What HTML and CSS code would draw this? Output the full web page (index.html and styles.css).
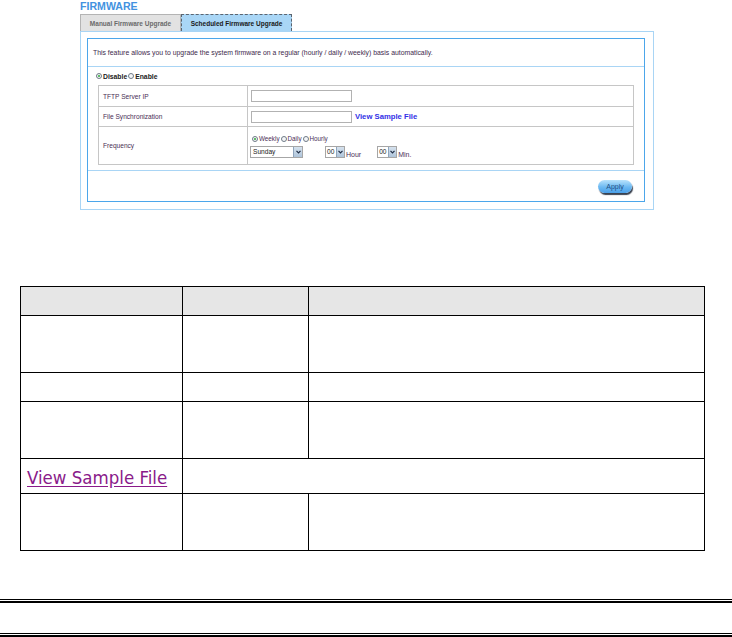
FILE: index.html
```html
<!DOCTYPE html>
<html>
<head>
<meta charset="utf-8">
<link rel="stylesheet" href="styles.css">
</head>
<body>
<div class="fw">
  <div class="fw-title">FIRMWARE</div>
  <div class="tabs">
    <div class="tab">Manual Firmware Upgrade</div>
    <div class="tab tab-active">Scheduled Firmware Upgrade</div>
  </div>
  <div class="outer">
    <div class="inner">
      <div class="desc">This feature allows you to upgrade the system firmware on a regular (hourly / daily / weekly) basis automatically.</div>
      <div class="mode">
        <span class="radio on"></span><span class="mode-txt">Disable</span>
        <span class="radio"></span><span class="mode-txt">Enable</span>
      </div>
      <table class="cfg">
        <colgroup><col class="cfg-c1"><col></colgroup>
        <tr class="cfg-r1"><td class="lbl">TFTP Server IP</td><td class="val"><span class="field"></span></td></tr>
        <tr class="cfg-r2"><td class="lbl">File Synchronization</td><td class="val"><span class="field"></span><a class="sample">View Sample File</a></td></tr>
        <tr class="cfg-r3"><td class="lbl">Frequency</td><td class="val">
          <div class="freq-opts">
            <span class="radio on"></span><span class="opt-txt">Weekly</span>
            <span class="radio"></span><span class="opt-txt">Daily</span>
            <span class="radio"></span><span class="opt-txt">Hourly</span>
          </div>
          <div class="freq-sel">
            <span class="select sel-day"><span class="sel-text">Sunday</span><span class="sel-arrow"><svg width="5" height="4" viewBox="0 0 5 4"><path d="M0.5 0.8 L2.5 2.8 L4.5 0.8" fill="none" stroke="#1e2c44" stroke-width="1.2"/></svg></span></span>
            <span class="select sel-num sel-hour"><span class="sel-text">00</span><span class="sel-arrow"><svg width="5" height="4" viewBox="0 0 5 4"><path d="M0.5 0.8 L2.5 2.8 L4.5 0.8" fill="none" stroke="#1e2c44" stroke-width="1.2"/></svg></span></span><span class="unit">Hour</span>
            <span class="select sel-num sel-min"><span class="sel-text">00</span><span class="sel-arrow"><svg width="5" height="4" viewBox="0 0 5 4"><path d="M0.5 0.8 L2.5 2.8 L4.5 0.8" fill="none" stroke="#1e2c44" stroke-width="1.2"/></svg></span></span><span class="unit">Min.</span>
          </div>
        </td></tr>
      </table>
      <div class="foot"><span class="apply">Apply</span></div>
    </div>
  </div>
</div>

<table class="doc">
  <colgroup><col class="doc-c1"><col class="doc-c2"><col class="doc-c3"></colgroup>
  <tr class="doc-head"><td></td><td></td><td></td></tr>
  <tr class="doc-tall"><td></td><td></td><td></td></tr>
  <tr class="doc-short"><td></td><td></td><td></td></tr>
  <tr class="doc-tall"><td></td><td></td><td></td></tr>
  <tr class="doc-link"><td><a class="doc-sample">View Sample File</a></td><td colspan="2"></td></tr>
  <tr class="doc-tall"><td></td><td></td><td></td></tr>
</table>

<div class="rule rule-first"></div>
<div class="rule rule-second"></div>
</body>
</html>
```

FILE: styles.css
```css
html, body {
  margin: 0;
  padding: 0;
  background: #ffffff;
}
body {
  font-family: "Liberation Sans", Arial, sans-serif;
  width: 732px;
}

/* ---------- firmware screenshot ---------- */
.fw {
  margin-left: 80px;
  width: 574px;
}
.fw-title {
  height: 14px;
  font-size: 10.6px;
  line-height: 13px;
  font-weight: bold;
  color: #4392e0;
}
.tabs {
  display: flex;
  height: 17px;
}
.tab {
  box-sizing: border-box;
  width: 101px;
  height: 17px;
  background: #e2e2e2;
  border: 1px solid #b4b4b4;
  border-bottom: none;
  color: #6a6a6a;
  font-size: 6.5px;
  font-weight: bold;
  display: flex;
  align-items: center;
  justify-content: center;
}
.tab-active {
  width: 111px;
  background: #a9d6f6;
  border: 1px dashed #5a6470;
  border-bottom: none;
  color: #1a1a1a;
}
.outer {
  border: 1px solid #a9d5f5;
  padding: 6px 8px 7px 6px;
}
.inner {
  border: 1px solid #4ca6ea;
}
.desc {
  height: 27px;
  border-bottom: 1px solid #a9d5f5;
  display: flex;
  align-items: center;
  padding-left: 5px;
  font-size: 6.87px;
  color: #3e2a4c;
  white-space: nowrap;
}
.mode {
  height: 18px;
  display: flex;
  align-items: center;
  padding-left: 8px;
  font-size: 6.8px;
  font-weight: bold;
  color: #222222;
}
.mode-txt {
  margin-left: 1px;
  margin-right: 1px;
}
.radio {
  box-sizing: border-box;
  display: inline-block;
  width: 6px;
  height: 6px;
  border-radius: 50%;
  border: 1px solid #6f7a86;
  background: #f4f6f8;
  position: relative;
  flex: none;
}
.radio.on::after {
  content: "";
  position: absolute;
  left: 1px;
  top: 1px;
  width: 2px;
  height: 2px;
  border-radius: 50%;
  background: #2fa83a;
}

.cfg {
  margin-left: 10px;
  width: 536px;
  border-collapse: collapse;
  table-layout: fixed;
}
.cfg-c1 { width: 149px; }
.cfg td {
  border: 1px solid #c6c6c6;
  padding: 0;
  vertical-align: middle;
}
.cfg-r1 td { height: 20px; }
.cfg-r2 td { height: 19px; }
.cfg-r3 td { height: 37px; }
.lbl {
  padding-left: 4px !important;
  font-size: 6.6px;
  color: #4a2e55;
}
.val {
  padding-left: 3px !important;
  font-size: 6.6px;
}
.field {
  display: inline-block;
  vertical-align: middle;
  box-sizing: border-box;
  width: 101px;
  height: 12px;
  border: 1px solid #b2b2b2;
  background: #ffffff;
}
.sample {
  vertical-align: middle;
  margin-left: 3px;
  font-size: 7.7px;
  font-weight: bold;
  color: #3131e6;
}
.freq-opts {
  display: flex;
  align-items: center;
  height: 10px;
  padding-left: 1px;
  color: #4a2e55;
  font-size: 6.3px;
}
.opt-txt {
  margin-left: 1px;
  margin-right: 1px;
}
.freq-sel {
  display: flex;
  align-items: center;
  margin-top: 2px;
  height: 12px;
  color: #4a2e55;
}
.select {
  box-sizing: border-box;
  display: flex;
  align-items: stretch;
  height: 12px;
  border: 1px solid #a6a6a6;
  background: #ffffff;
}
.sel-text {
  flex: 1;
  display: flex;
  align-items: center;
  padding-left: 2px;
  color: #222222;
  font-size: 6.6px;
}
.sel-arrow {
  width: 8px;
  background: linear-gradient(#d6e2ee, #aec4da);
  border-left: 1px solid #8ea4bc;
  display: flex;
  align-items: center;
  justify-content: center;
}
.sel-day { width: 53px; margin-left: -1px; }
.sel-num { width: 20px; }
.sel-num .sel-text { padding-left: 1px; }
.sel-num .sel-arrow { width: 7px; }
.sel-hour { margin-left: 22px; }
.sel-min { margin-left: 16px; }
.unit {
  margin-left: 1px;
  font-size: 7px;
  align-self: flex-end;
}

.foot {
  margin-top: 5px;
  border-top: 1px solid #a9d5f5;
  height: 30px;
  display: flex;
  align-items: center;
  justify-content: flex-end;
  padding-right: 12px;
}
.apply {
  box-sizing: border-box;
  width: 34px;
  height: 13px;
  border-radius: 7px;
  background: linear-gradient(#b9e3fc, #6cb9f2 55%, #4a9fe8);
  box-shadow: 1px 2px 1px #3a4250;
  color: #1e4f86;
  font-size: 7px;
  display: flex;
  align-items: center;
  justify-content: center;
}

/* ---------- document table ---------- */
.doc {
  margin-top: 76px;
  margin-left: 20px;
  width: 684px;
  border-collapse: collapse;
  table-layout: fixed;
}
.doc-c1 { width: 162px; }
.doc-c2 { width: 126px; }
.doc-c3 { width: 396px; }
.doc td {
  border: 1px solid #000000;
  padding: 0;
}
.doc-head td {
  height: 28px;
  background: #e6e6e6;
}
.doc-tall td { height: 56px; }
.doc-short td { height: 28px; }
.doc-link td {
  height: 34px;
  vertical-align: middle;
}
.doc-sample {
  display: inline-block;
  margin-left: 6px;
  margin-top: 3px;
  font-family: "DejaVu Sans Condensed", "DejaVu Sans", sans-serif;
  font-size: 18.5px;
  color: #8a1a8a;
  text-decoration: underline;
  text-underline-offset: 2px;
}

/* ---------- double rules ---------- */
.rule {
  height: 1px;
  border-top: 1px solid #000000;
  border-bottom: 2px solid #000000;
}
.rule-first { margin-top: 48px; }
.rule-second { margin-top: 30px; }
```
